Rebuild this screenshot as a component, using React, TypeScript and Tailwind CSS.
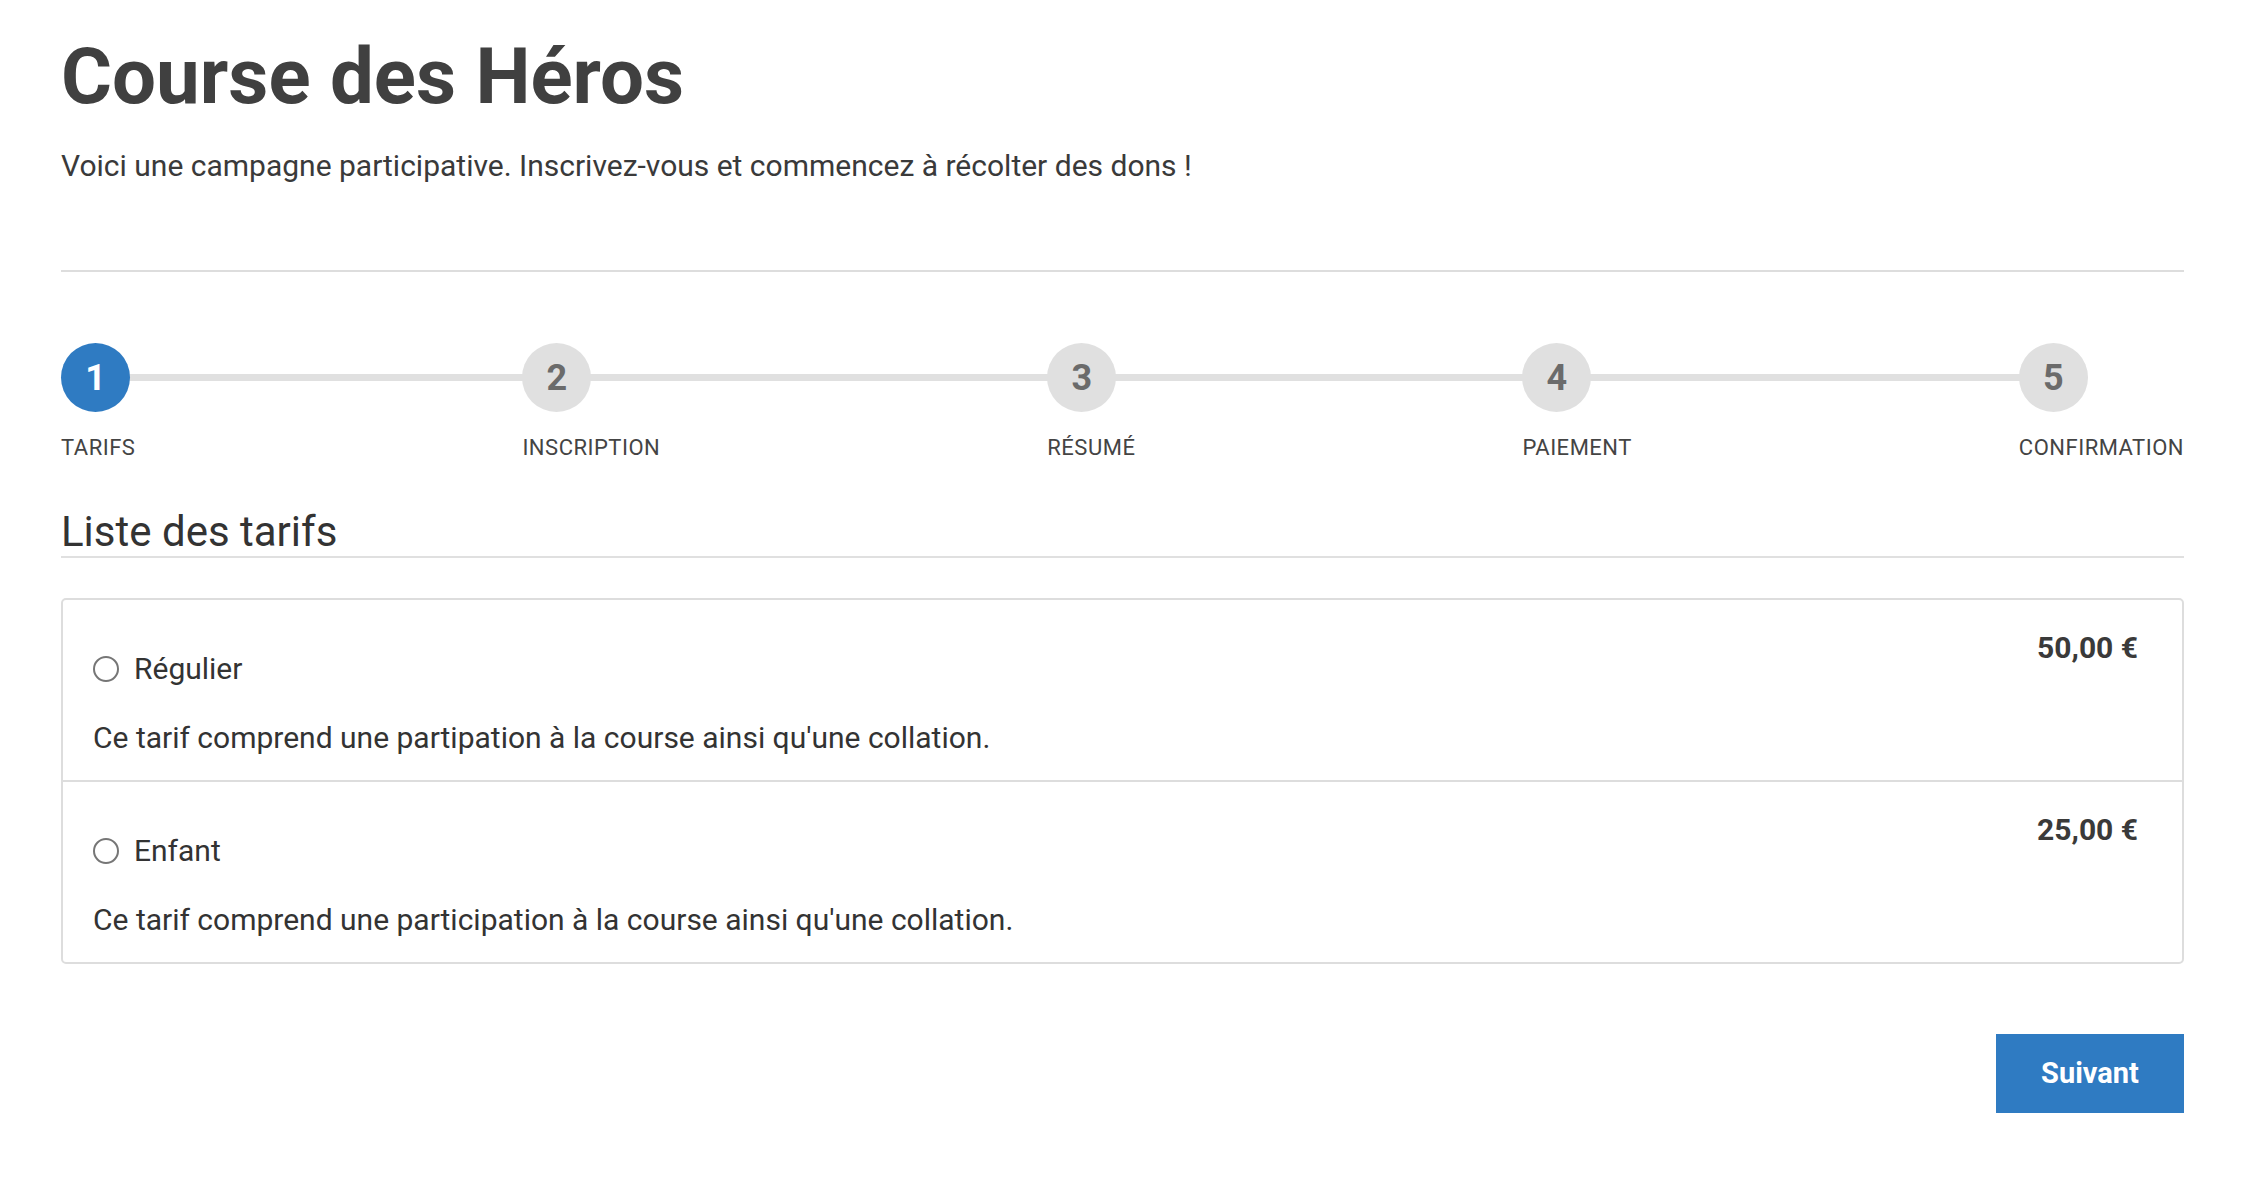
import React from "react";

const steps = [
  { n: "1", label: "TARIFS", active: true },
  { n: "2", label: "INSCRIPTION", active: false },
  { n: "3", label: "RÉSUMÉ", active: false },
  { n: "4", label: "PAIEMENT", active: false },
  { n: "5", label: "CONFIRMATION", active: false },
];

const tarifs = [
  {
    name: "Régulier",
    price: "50,00 €",
    desc: "Ce tarif comprend une partipation à la course ainsi qu'une collation.",
  },
  {
    name: "Enfant",
    price: "25,00 €",
    desc: "Ce tarif comprend une participation à la course ainsi qu'une collation.",
  },
];

export default function App() {
  return (
    <div
      className="min-h-screen w-full bg-white text-[#3a3a3a]"
      style={{ fontFamily: "Roboto, 'Noto Sans', 'Liberation Sans', sans-serif" }}
    >
      <div className="ml-[61px] w-[2123px] pt-[30px] pb-[60px]">
        <h1 className="text-[78px] leading-[94px] font-bold text-[#404040]">Course des Héros</h1>
        <p className="mt-[19px] text-[30px] leading-[45px] text-[#3a3a3a]">
          Voici une campagne participative. Inscrivez-vous et commencez à récolter des dons !
        </p>

        <div className="mt-[82px] h-[2px] bg-[#dddddd]" />

        {/* Stepper */}
        <div className="relative mt-[71px] flex justify-between">
          <div className="absolute left-[35px] right-[130px] top-[31px] h-[7px] bg-[#e0e0e0]" />
          {steps.map((s) => (
            <div key={s.n} className="relative flex flex-col items-start">
              <div
                className={
                  s.active
                    ? "flex h-[69px] w-[69px] items-center justify-center rounded-full bg-[#2f7bc2] text-[36px] font-bold text-white"
                    : "flex h-[69px] w-[69px] items-center justify-center rounded-full bg-[#e0e0e0] text-[36px] font-bold text-[#6b6b6b]"
                }
              >
                {s.n}
              </div>
              <div className="mt-[19px] text-[22px] leading-[33px] tracking-[0.5px] text-[#444444]">
                {s.label}
              </div>
            </div>
          ))}
        </div>

        {/* Liste des tarifs */}
        <h2 className="mt-[44px] border-b-2 border-[#e0e0e0] text-[42px] leading-[48px] text-[#333333]">
          Liste des tarifs
        </h2>

        <div className="mt-[40px] rounded-[5px] border-2 border-[#dddddd]">
          {tarifs.map((t, i) => (
            <div
              key={t.name}
              className={
                i === 0
                  ? "flex justify-between pl-[30px] pr-[44px] pt-[26px] pb-[21px]"
                  : "flex justify-between border-t-2 border-[#dddddd] pl-[30px] pr-[44px] pt-[26px] pb-[21px]"
              }
            >
              <div className="flex flex-col">
                <label className="mt-[21px] flex items-center gap-[15px] text-[30px] leading-[43px] text-[#333333]">
                  <span className="block h-[26px] w-[26px] rounded-full border-2 border-[#767676] bg-white" />
                  {t.name}
                </label>
                <p className="mt-[27px] text-[30px] leading-[42px] text-[#333333]">{t.desc}</p>
              </div>
              <div className="text-[30px] leading-[43px] font-bold text-[#3a3a3a]">{t.price}</div>
            </div>
          ))}
        </div>

        <div className="mt-[70px] flex justify-end">
          <button className="h-[79px] w-[188px] bg-[#2f7bc2] text-[29px] font-bold text-white">
            Suivant
          </button>
        </div>
      </div>
    </div>
  );
}
